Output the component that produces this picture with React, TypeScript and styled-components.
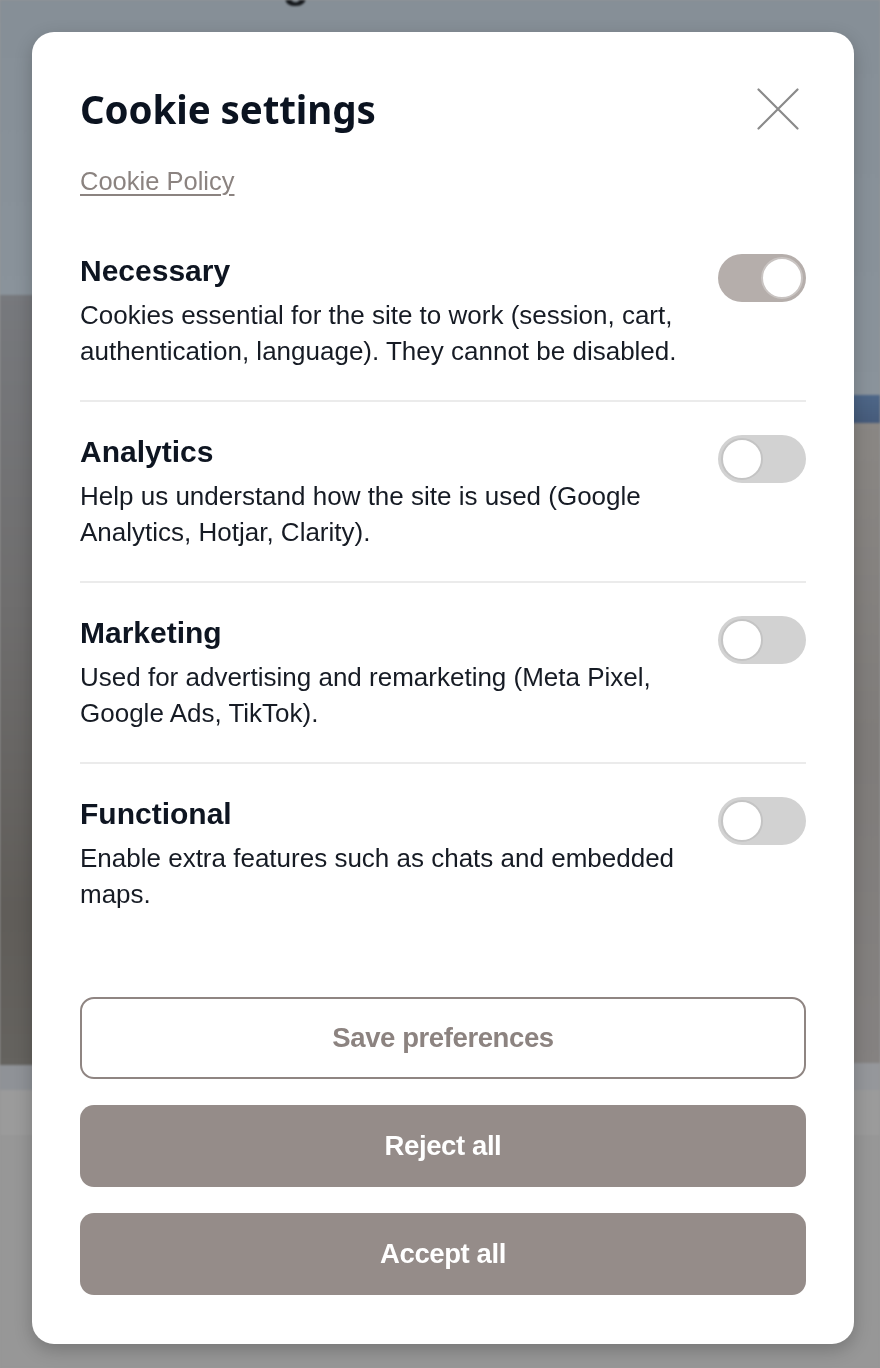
import React, { useState } from "react";
import styled, { createGlobalStyle } from "styled-components";

const Global = createGlobalStyle`
  html, body { margin: 0; padding: 0; }
  body {
    width: 880px;
    height: 1368px;
    overflow: hidden;
    font-family: "Liberation Sans", Arial, sans-serif;
    background: #979797;
  }
  * { box-sizing: border-box; }
`;

/* ---------- Backdrop page (behind the dialog) ---------- */
const Page = styled.div`
  width: 880px;
  height: 1368px;
  display: flex;
  flex-direction: column;
  overflow: hidden;
  filter: blur(1px);
`;

const Upper = styled.div`
  display: grid;
  grid-template-columns: 1fr 1fr;
  height: 1090px;
`;

const HalfCol = styled.div`
  display: flex;
  flex-direction: column;
  overflow: hidden;
`;

const Band = styled.div<{ $h: number; $bg: string }>`
  height: ${(p) => p.$h}px;
  flex: ${(p) => (p.$h === 0 ? 1 : "none")};
  background: ${(p) => p.$bg};
  overflow: hidden;
`;

const PageHeading = styled.div`
  margin-top: -39px;
  padding-left: 192px;
  font-family: "Liberation Sans", Arial, sans-serif;
  font-weight: 700;
  font-size: 43px;
  line-height: 43px;
  color: #15181c;
  white-space: nowrap;
`;

const FooterBar = styled.div`
  margin: auto 38px 0;
  height: 6px;
  border-radius: 8px 8px 0 0;
  background: #4a4644;
`;

/* ---------- Dialog ---------- */
const Overlay = styled.div`
  position: fixed;
  inset: 0;
  display: flex;
  align-items: flex-start;
  justify-content: flex-start;
  padding: 32px 0 0 32px;
`;

const Dialog = styled.div`
  width: 822px;
  height: 1312px;
  background: #ffffff;
  border-radius: 22px;
  box-shadow: 0 6px 18px rgba(0, 0, 0, 0.22);
  padding: 48px 48px 49px;
  display: flex;
  flex-direction: column;
`;

const Header = styled.div`
  display: flex;
  align-items: center;
  justify-content: space-between;
  height: 58px;
`;

const Title = styled.h2`
  margin: 0;
  font-family: "Noto Sans", "Open Sans", sans-serif;
  font-weight: 700;
  font-size: 38.5px;
  line-height: 58px;
  color: #0b1320;
  letter-spacing: -0.1px;
`;

const CloseButton = styled.button`
  width: 48px;
  height: 48px;
  margin-right: 4px;
  padding: 0;
  border: none;
  background: transparent;
  display: flex;
  align-items: center;
  justify-content: center;
  cursor: pointer;
`;

const PolicyLink = styled.a`
  display: block;
  margin-top: 25px;
  font-size: 25.5px;
  line-height: 36px;
  color: #8b8380;
  text-decoration: underline;
  text-decoration-thickness: 1.5px;
  text-underline-offset: 4px;
  align-self: flex-start;
`;

const SectionList = styled.div`
  margin-top: 22px;
  display: flex;
  flex-direction: column;
`;

const Section = styled.div<{ $last?: boolean }>`
  display: flex;
  align-items: flex-start;
  gap: 26px;
  padding: 32px 0 ${(p) => (p.$last ? 32 : 31)}px;
  border-bottom: ${(p) => (p.$last ? "none" : "2px solid #ebebeb")};
`;

const SectionText = styled.div`
  flex: 1;
  min-width: 0;
`;

const SectionTitle = styled.h3`
  margin: 0 0 8px;
  font-family: "Liberation Sans", Arial, sans-serif;
  font-weight: 700;
  font-size: 30px;
  line-height: 36px;
  color: #0e1521;
`;

const SectionDesc = styled.p`
  margin: 0;
  font-family: "Liberation Sans", Arial, sans-serif;
  font-size: 26px;
  line-height: 36px;
  color: #161b24;
`;

const Track = styled.button<{ $on: boolean; $locked?: boolean }>`
  flex: none;
  width: 88px;
  height: 48px;
  margin-top: 1px;
  padding: 0 3px;
  border: none;
  border-radius: 24px;
  background: ${(p) => (p.$on ? "#b5aeab" : "#d2d2d2")};
  display: flex;
  align-items: center;
  justify-content: ${(p) => (p.$on ? "flex-end" : "flex-start")};
  cursor: ${(p) => (p.$locked ? "default" : "pointer")};
`;

const Knob = styled.span<{ $on: boolean }>`
  width: 42px;
  height: 42px;
  border-radius: 50%;
  background: #ffffff;
  border: 2px solid ${(p) => (p.$on ? "#c9c4c2" : "#c4c4c4")};
`;

const Actions = styled.div`
  margin-top: auto;
  display: flex;
  flex-direction: column;
  gap: 26px;
`;

const ActionButton = styled.button<{ $variant: "outline" | "solid" }>`
  height: 82px;
  width: 100%;
  border-radius: 14px;
  font-family: "Liberation Sans", Arial, sans-serif;
  font-weight: 700;
  font-size: 27.5px;
  letter-spacing: -0.4px;
  cursor: pointer;
  border: ${(p) => (p.$variant === "outline" ? "2px solid #8f8582" : "none")};
  background: ${(p) => (p.$variant === "outline" ? "#ffffff" : "#958c89")};
  color: ${(p) => (p.$variant === "outline" ? "#8c8380" : "#ffffff")};
`;

type Cat = { key: string; title: string; desc: string; locked?: boolean };

const categories: Cat[] = [
  {
    key: "necessary",
    title: "Necessary",
    desc: "Cookies essential for the site to work (session, cart, authentication, language). They cannot be disabled.",
    locked: true,
  },
  {
    key: "analytics",
    title: "Analytics",
    desc: "Help us understand how the site is used (Google Analytics, Hotjar, Clarity).",
  },
  {
    key: "marketing",
    title: "Marketing",
    desc: "Used for advertising and remarketing (Meta Pixel, Google Ads, TikTok).",
  },
  {
    key: "functional",
    title: "Functional",
    desc: "Enable extra features such as chats and embedded maps.",
  },
];

const CloseIcon = () => (
  <svg width="44" height="44" viewBox="0 0 44 44" fill="none">
    <path
      d="M2.5 2.5 L41.5 41.5 M41.5 2.5 L2.5 41.5"
      stroke="#8a8a8a"
      strokeWidth="2.2"
      strokeLinecap="round"
    />
  </svg>
);

export default function App() {
  const [state, setState] = useState<Record<string, boolean>>({
    necessary: true,
    analytics: false,
    marketing: false,
    functional: false,
  });

  return (
    <>
      <Global />
      <Page aria-hidden="true">
        <Upper>
          <HalfCol>
            <Band $h={295} $bg="linear-gradient(180deg, #868f97 0%, #8a939b 100%)">
              <PageHeading>Design ideas,</PageHeading>
            </Band>
            <Band $h={770} $bg="linear-gradient(180deg, #77797d 0%, #6f6e6e 40%, #605d59 80%, #65635f 100%)" />
            <Band $h={0} $bg="#8f9297" />
          </HalfCol>
          <HalfCol>
            <Band $h={395} $bg="linear-gradient(180deg, #868f97 0%, #8a939b 100%)" />
            <Band $h={28} $bg="linear-gradient(180deg, #4e6788 0%, #465b7a 100%)" />
            <Band $h={640} $bg="linear-gradient(180deg, #8a8784 0%, #7f7c7a 50%, #858281 100%)" />
            <Band $h={0} $bg="#95979b" />
          </HalfCol>
        </Upper>
        <Band $h={45} $bg="#9b9b9b" />
        <Band $h={0} $bg="#979797">
          <FooterBar />
        </Band>
      </Page>

      <Overlay>
        <Dialog role="dialog" aria-label="Cookie settings">
          <Header>
            <Title>Cookie settings</Title>
            <CloseButton aria-label="Close">
              <CloseIcon />
            </CloseButton>
          </Header>
          <PolicyLink href="#">Cookie Policy</PolicyLink>
          <SectionList>
            {categories.map((c, i) => (
              <Section key={c.key} $last={i === categories.length - 1}>
                <SectionText>
                  <SectionTitle>{c.title}</SectionTitle>
                  <SectionDesc>{c.desc}</SectionDesc>
                </SectionText>
                <Track
                  $on={state[c.key]}
                  $locked={c.locked}
                  aria-pressed={state[c.key]}
                  onClick={() =>
                    !c.locked && setState((s) => ({ ...s, [c.key]: !s[c.key] }))
                  }
                >
                  <Knob $on={state[c.key]} />
                </Track>
              </Section>
            ))}
          </SectionList>
          <Actions>
            <ActionButton $variant="outline">Save preferences</ActionButton>
            <ActionButton $variant="solid">Reject all</ActionButton>
            <ActionButton $variant="solid">Accept all</ActionButton>
          </Actions>
        </Dialog>
      </Overlay>
    </>
  );
}
